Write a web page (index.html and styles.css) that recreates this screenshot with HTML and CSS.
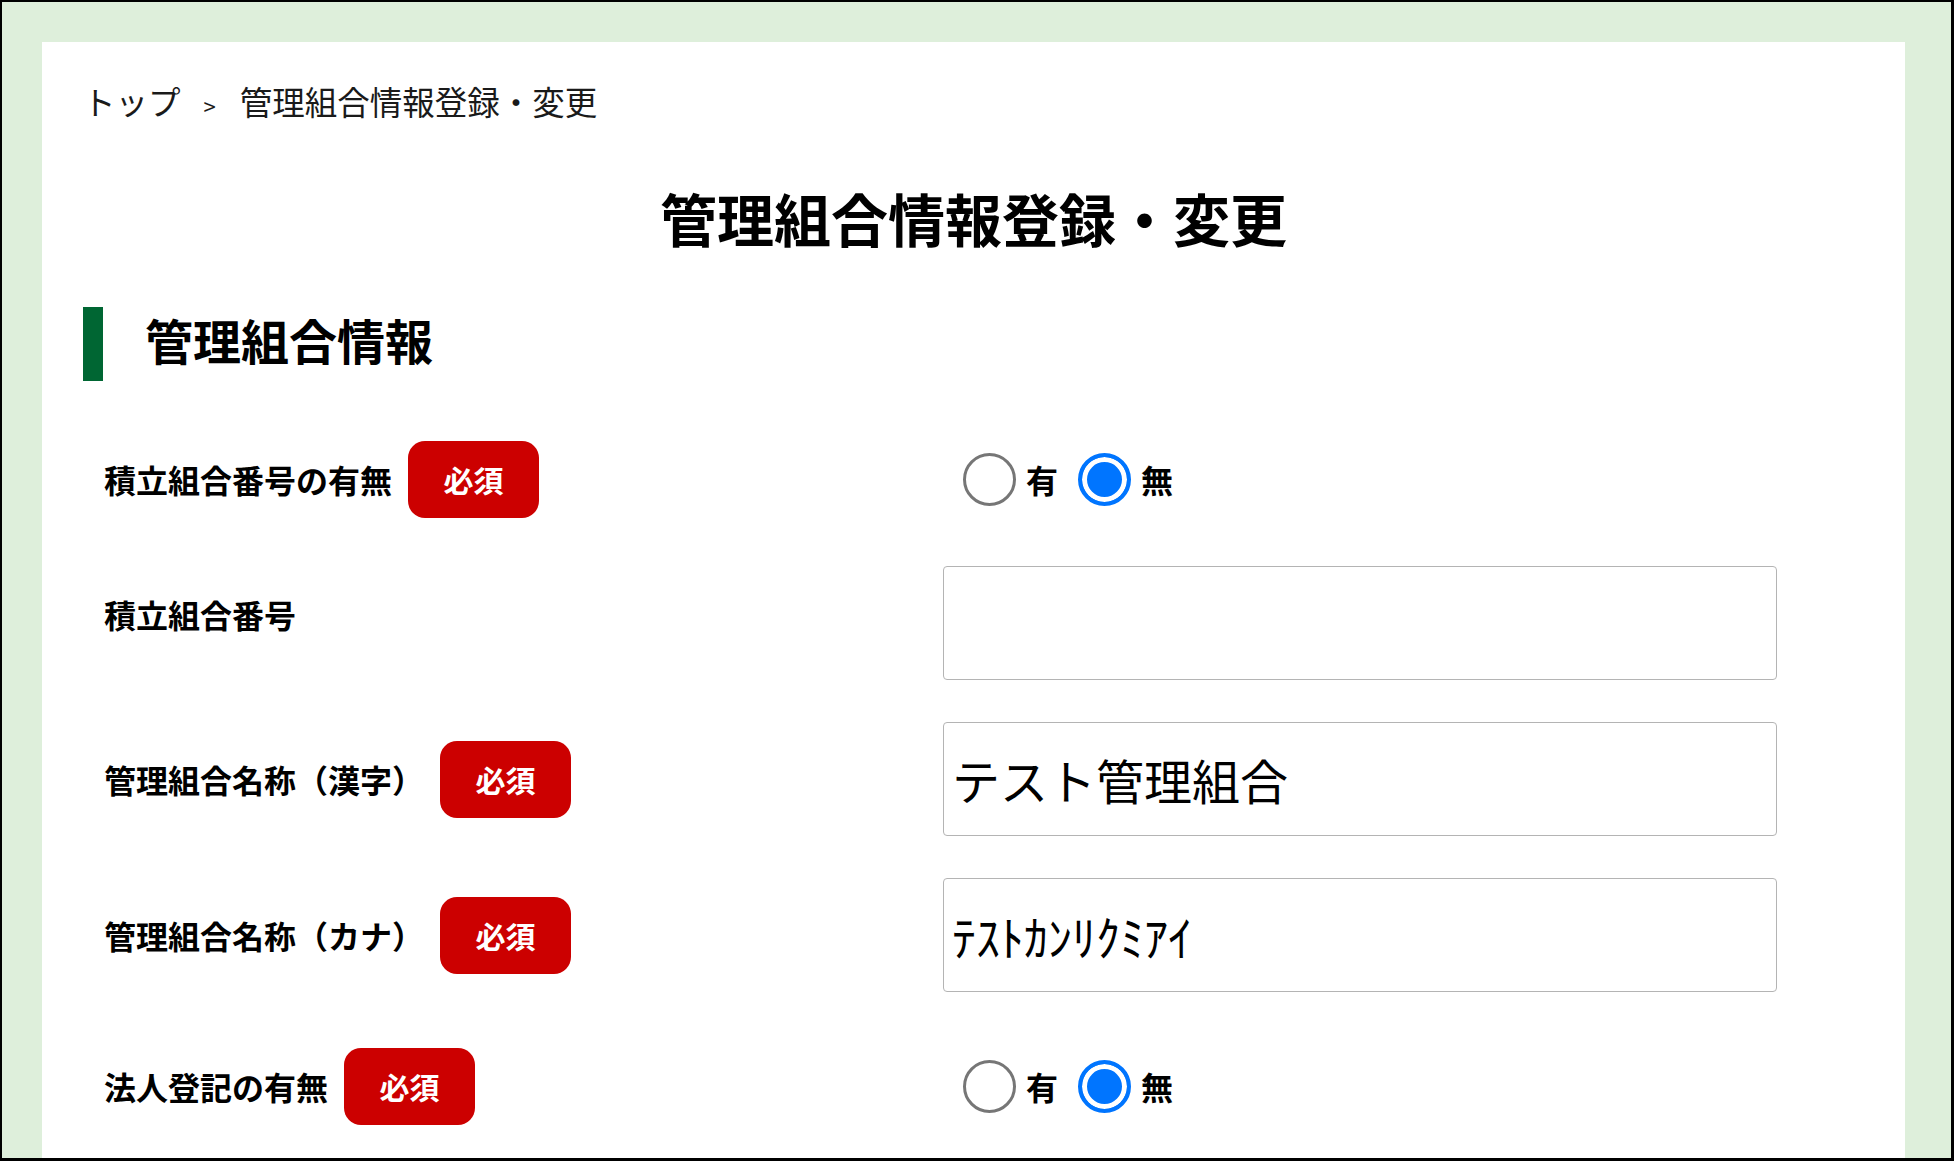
FILE: index.html
```html
<!DOCTYPE html>
<html lang="ja">
<head>
<meta charset="utf-8">
<title>管理組合情報登録・変更</title>
<link rel="stylesheet" href="styles.css">
</head>
<body>
<div class="frame">
  <main class="panel">
    <nav class="breadcrumb">
      <span class="crumb">トップ</span>
      <span class="sep">&gt;</span>
      <span class="crumb">管理組合情報登録・変更</span>
    </nav>
    <h1 class="page-title">管理組合情報登録・変更</h1>
    <h2 class="section-title">管理組合情報</h2>
    <div class="form">
      <div class="row row--radio">
        <div class="label"><span>積立組合番号の有無</span><span class="badge">必須</span></div>
        <div class="field radios">
          <label class="opt"><input type="radio" class="radio" name="r1"><span>有</span></label>
          <label class="opt"><input type="radio" class="radio" name="r1" checked><span>無</span></label>
        </div>
      </div>
      <div class="row">
        <div class="label label--plain"><span>積立組合番号</span></div>
        <div class="field"><input type="text" class="text-input" value=""></div>
      </div>
      <div class="row">
        <div class="label"><span>管理組合名称（漢字）</span><span class="badge">必須</span></div>
        <div class="field"><input type="text" class="text-input" value="テスト管理組合"></div>
      </div>
      <div class="row">
        <div class="label"><span>管理組合名称（カナ）</span><span class="badge">必須</span></div>
        <div class="field"><input type="text" class="text-input" value="ﾃｽﾄｶﾝﾘｸﾐｱｲ"></div>
      </div>
      <div class="row row--radio row--last">
        <div class="label"><span>法人登記の有無</span><span class="badge">必須</span></div>
        <div class="field radios">
          <label class="opt"><input type="radio" class="radio" name="r2"><span>有</span></label>
          <label class="opt"><input type="radio" class="radio" name="r2" checked><span>無</span></label>
        </div>
      </div>
    </div>
  </main>
</div>
</body>
</html>
```
FILE: styles.css
```css
* { box-sizing: border-box; }
html, body {
  margin: 0;
  padding: 0;
  background: #ffffff;
}
body {
  font-family: "Noto Sans CJK JP", "Noto Sans", sans-serif;
  color: #111;
}
.frame {
  width: 1954px;
  height: 1161px;
  border: 3px solid #000;
  border-width: 2px 3px 3px 2px;
  background: #deefdb;
  padding: 40px 46px 0 40px;
  display: flex;
  flex-direction: column;
  overflow: hidden;
}
.panel {
  flex: 1;
  background: #fff;
  padding: 35px 41px 0 41px;
  overflow: hidden;
}
.breadcrumb {
  display: flex;
  align-items: baseline;
  font-size: 32.5px;
  line-height: 48px;
  color: #1a1a1a;
}
.sep {
  font-size: 22px;
  margin: 0 24px 0 23px;
}
.page-title {
  margin: 48px 0 0;
  text-align: center;
  font-size: 57px;
  line-height: 80px;
  font-weight: 700;
  color: #000;
}
.section-title {
  margin: 50px 0 0;
  border-left: 20px solid #006633;
  padding: 0 0 10px 42px;
  font-size: 48px;
  line-height: 64px;
  font-weight: 700;
  color: #000;
}
.form {
  margin-top: 53px;
  padding-left: 21px;
  display: flex;
  flex-direction: column;
  gap: 42px;
}
.row {
  display: grid;
  grid-template-columns: 839px 834px;
  align-items: center;
  min-height: 114px;
}
.row--radio { min-height: 90px; }
.row--last { min-height: 104px; }
.label {
  display: flex;
  align-items: center;
  font-size: 32px;
  line-height: 48px;
  font-weight: 700;
  color: #000;
}
.label--plain { padding-bottom: 18px; }
.badge {
  margin-left: 16px;
  width: 131px;
  height: 77px;
  border-radius: 17px;
  background: #cc0000;
  color: #fff;
  font-size: 30px;
  font-weight: 700;
  display: flex;
  align-items: center;
  justify-content: center;
  line-height: 1;
}
.radios {
  display: flex;
  align-items: center;
}
.opt {
  display: flex;
  align-items: center;
  font-size: 32px;
  line-height: 48px;
  font-weight: 700;
  color: #000;
}
.radio {
  appearance: none;
  -webkit-appearance: none;
  width: 53px;
  height: 53px;
  margin: 0 10px 0 20px;
  border: 3px solid #767676;
  border-radius: 50%;
  background: #fff;
}
.radio:checked {
  border: 4px solid #0075ff;
  background: #0075ff;
  box-shadow: inset 0 0 0 5px #fff;
}
.text-input {
  display: block;
  width: 834px;
  height: 114px;
  border: 1px solid #b4b4b4;
  border-radius: 4px;
  padding: 0 8px;
  font-family: "Noto Sans CJK JP", "Noto Sans", sans-serif;
  font-size: 48px;
  color: #000;
  background: #fff;
  outline: none;
}
```
